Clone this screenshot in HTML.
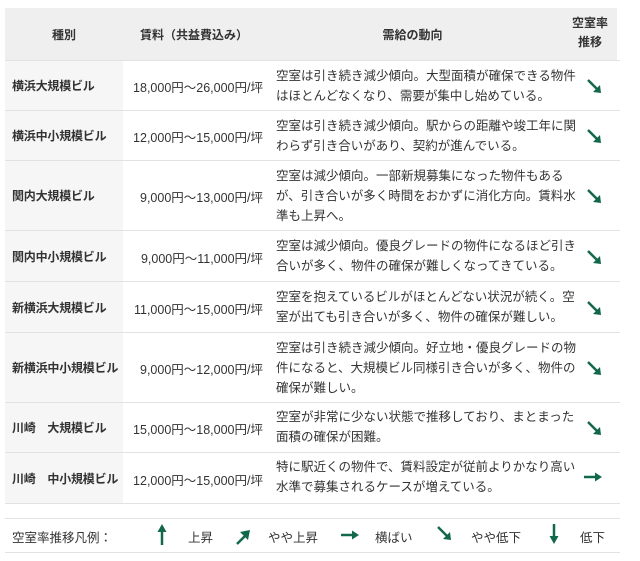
<!DOCTYPE html>
<html><head><meta charset="utf-8"><style>
body{margin:0;width:640px;height:561px;background:#fff;position:relative;overflow:hidden;font-family:"Liberation Sans","Noto Sans CJK JP",sans-serif;color:#333;font-size:12.5px}
.a{position:absolute}
.hdr{left:5px;top:8px;width:612px;height:52px;background:#efefef}
.c1{position:absolute;left:5px;width:118px;background:#f6f6f6}
.line{position:absolute;left:5px;width:615px;height:1px;background:#e2e2e2}
.h{position:absolute;font-weight:bold;text-align:center;font-size:12px}
.n{position:absolute;left:12px;font-weight:bold;font-size:12px;letter-spacing:-0.2px}
.p{position:absolute;right:377px;white-space:nowrap}
.d{position:absolute;left:276px;line-height:20px;white-space:nowrap}
svg{position:absolute}
</style></head><body>
<div class="a hdr"></div>
<div class="h" style="left:5px;width:118px;top:26px">種別</div>
<div class="h" style="left:123px;width:142px;top:26px">賃料（共益費込み）</div>
<div class="h" style="left:265px;width:295px;top:26px">需給の動向</div>
<div class="h" style="left:560px;width:60px;top:14px;line-height:19px">空室率<br>推移</div>

<div class="c1" style="top:60px;height:443px"></div>
<div class="line" style="top:60px"></div>
<div class="line" style="top:110px"></div>
<div class="line" style="top:160px"></div>
<div class="line" style="top:230px"></div>
<div class="line" style="top:281px"></div>
<div class="line" style="top:332px"></div>
<div class="line" style="top:402px"></div>
<div class="line" style="top:452px"></div>
<div class="line" style="top:503px"></div>
<div class="line" style="top:518px"></div>
<div class="line" style="top:552px"></div>

<div class="n" style="top:77px">横浜大規模ビル</div>
<div class="p" style="top:77px">18,000円～26,000円/坪</div>
<div class="d" style="top:66px">空室は引き続き減少傾向。大型面積が確保できる物件<br>はほとんどなくなり、需要が集中し始めている。</div>

<div class="n" style="top:127px">横浜中小規模ビル</div>
<div class="p" style="top:127px">12,000円～15,000円/坪</div>
<div class="d" style="top:116px">空室は引き続き減少傾向。駅からの距離や竣工年に関<br>わらず引き合いがあり、契約が進んでいる。</div>

<div class="n" style="top:187px">関内大規模ビル</div>
<div class="p" style="top:187px">9,000円～13,000円/坪</div>
<div class="d" style="top:166px">空室は減少傾向。一部新規募集になった物件もある<br>が、引き合いが多く時間をおかずに消化方向。賃料水<br>準も上昇へ。</div>

<div class="n" style="top:248px">関内中小規模ビル</div>
<div class="p" style="top:248px">9,000円～11,000円/坪</div>
<div class="d" style="top:236px">空室は減少傾向。優良グレードの物件になるほど引き<br>合いが多く、物件の確保が難しくなってきている。</div>

<div class="n" style="top:299px">新横浜大規模ビル</div>
<div class="p" style="top:299px">11,000円～15,000円/坪</div>
<div class="d" style="top:287px">空室を抱えているビルがほとんどない状況が続く。空<br>室が出ても引き合いが多く、物件の確保が難しい。</div>

<div class="n" style="top:359px">新横浜中小規模ビル</div>
<div class="p" style="top:359px">9,000円～12,000円/坪</div>
<div class="d" style="top:338px">空室は引き続き減少傾向。好立地・優良グレードの物<br>件になると、大規模ビル同様引き合いが多く、物件の<br>確保が難しい。</div>

<div class="n" style="top:419px">川崎　大規模ビル</div>
<div class="p" style="top:419px">15,000円～18,000円/坪</div>
<div class="d" style="top:407px">空室が非常に少ない状態で推移しており、まとまった<br>面積の確保が困難。</div>

<div class="n" style="top:470px">川崎　中小規模ビル</div>
<div class="p" style="top:470px">12,000円～15,000円/坪</div>
<div class="d" style="top:457px">特に駅近くの物件で、賃料設定が従前よりかなり高い<br>水準で募集されるケースが増えている。</div>

<svg width="640" height="561" style="left:0;top:0">
<defs><g id="dr"><path d="M0 0 L10 10" stroke="#11684c" stroke-width="2.5"/><path d="M5 12 L13 13 L12 5 Z" fill="#11684c"/></g>
<g id="r"><path d="M0 0 L13 0" stroke="#11684c" stroke-width="2.5"/><path d="M11 -4.5 L18 0 L11 4.5 Z" fill="#11684c"/></g></defs>
<use href="#dr" x="588" y="80"/>
<use href="#dr" x="588" y="130"/>
<use href="#dr" x="588" y="190"/>
<use href="#dr" x="588" y="251"/>
<use href="#dr" x="588" y="302"/>
<use href="#dr" x="588" y="362"/>
<use href="#dr" x="588" y="422"/>
<use href="#r" x="584" y="477"/>
<path d="M162 545 L162 530" stroke="#11684c" stroke-width="2.5"/><path d="M157.5 532 L162 524 L166.5 532 Z" fill="#11684c"/>
<path d="M237 544 L246 535" stroke="#11684c" stroke-width="2.5"/><path d="M240 532 L250 530 L248 540 Z" fill="#11684c"/>
<use href="#r" x="341" y="535"/>
<use href="#dr" x="438" y="527"/>
<path d="M554 524 L554 538" stroke="#11684c" stroke-width="2.5"/><path d="M549.5 536 L554 544 L558.5 536 Z" fill="#11684c"/>
</svg>
<div class="a" style="left:12px;top:527px">空室率推移凡例：</div>
<div class="a" style="left:188px;top:527px">上昇</div>
<div class="a" style="left:268px;top:527px">やや上昇</div>
<div class="a" style="left:375px;top:527px">横ばい</div>
<div class="a" style="left:471px;top:527px">やや低下</div>
<div class="a" style="left:580px;top:527px">低下</div>
</body></html>
